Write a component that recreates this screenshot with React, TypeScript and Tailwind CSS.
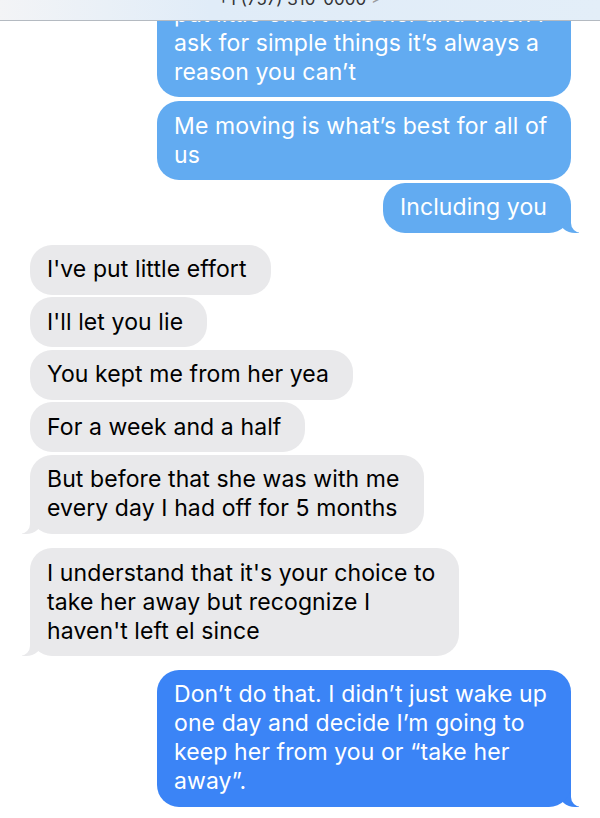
import React from "react";

type Side = "blue" | "dark" | "gray";

const bg: Record<Side, string> = {
  blue: "bg-[#62abf1]",
  dark: "bg-[#3b84f6]",
  gray: "bg-[#e9e9eb]",
};

function Bubble({
  side,
  lines,
  tail,
  className = "",
}: {
  side: Side;
  lines: string[];
  tail?: boolean;
  className?: string;
}) {
  const right = side !== "gray";
  return (
    <div
      className={`relative ${right ? "self-end mr-[29px]" : "self-start ml-[30px]"} ${className}`}
    >
      {tail && right && (
        <>
          <div className={`absolute bottom-0 right-[-8px] h-[25px] w-[20px] rounded-bl-[16px_14px] ${bg[side]}`} />
          <div className="absolute bottom-0 right-[-26px] h-[25px] w-[26px] rounded-bl-[10px] bg-white" />
        </>
      )}
      {tail && !right && (
        <>
          <div className={`absolute bottom-0 left-[-8px] h-[25px] w-[20px] rounded-br-[16px_14px] ${bg[side]}`} />
          <div className="absolute bottom-0 left-[-26px] h-[25px] w-[26px] rounded-br-[10px] bg-white" />
        </>
      )}
      <div
        className={`relative rounded-[22px] pl-[17px] pr-[24px] py-[10.5px] text-[23px] leading-[29px] tracking-[0.1px] ${bg[side]} ${
          right ? "text-white" : "text-black"
        }`}
      >
        {lines.map((l, i) => (
          <span key={i} className="block whitespace-nowrap">
            {l}
          </span>
        ))}
      </div>
    </div>
  );
}

export default function App() {
  return (
    <div
      className="relative h-[818px] w-[600px] overflow-hidden bg-white"
      style={{ fontFamily: "Inter, 'Noto Sans', sans-serif" }}
    >
      <div className="mt-[-11px] flex flex-col gap-[2.5px]">
        <Bubble
          side="blue"
          lines={[
            "put little effort into her and when I",
            "ask for simple things it\u2019s always a",
            "reason you can\u2019t",
          ]}
          className="w-[414px]"
        />
        <Bubble
          side="blue"
          lines={["Me moving is what\u2019s best for all of", "us"]}
          className="mt-[1.5px] w-[414px]"
        />
        <Bubble side="blue" tail lines={["Including you"]} />
        <Bubble side="gray" lines={["I've put little effort"]} className="mt-[9.5px]" />
        <Bubble side="gray" lines={["I'll let you lie"]} />
        <Bubble side="gray" lines={["You kept me from her yea"]} />
        <Bubble side="gray" lines={["For a week and a half"]} />
        <Bubble
          side="gray"
          tail
          lines={["But before that she was with me", "every day I had off for 5 months"]}
        />
        <Bubble
          side="gray"
          tail
          lines={[
            "I understand that it's your choice to",
            "take her away but recognize I",
            "haven't left el since",
          ]}
          className="mt-[12px]"
        />
        <Bubble
          side="dark"
          tail
          lines={[
            "Don\u2019t do that. I didn\u2019t just wake up",
            "one day and decide I\u2019m going to",
            "keep her from you or \u201Ctake her",
            "away\u201D.",
          ]}
          className="mt-[11px] w-[414px]"
        />
      </div>

      <div className="absolute left-0 right-0 top-0 h-[21px] overflow-hidden border-b border-[#b4bac1] bg-linear-to-r from-[#f3f4f6] via-[#e0ecf8] via-35% to-[#e3eef8]">
        <div className="mt-[-11px] text-center text-[17px] leading-[20px] text-[#333336]">
          +1 (757) 310-0000 <span className="text-[#9a9a9e]">&gt;</span>
        </div>
      </div>
    </div>
  );
}
